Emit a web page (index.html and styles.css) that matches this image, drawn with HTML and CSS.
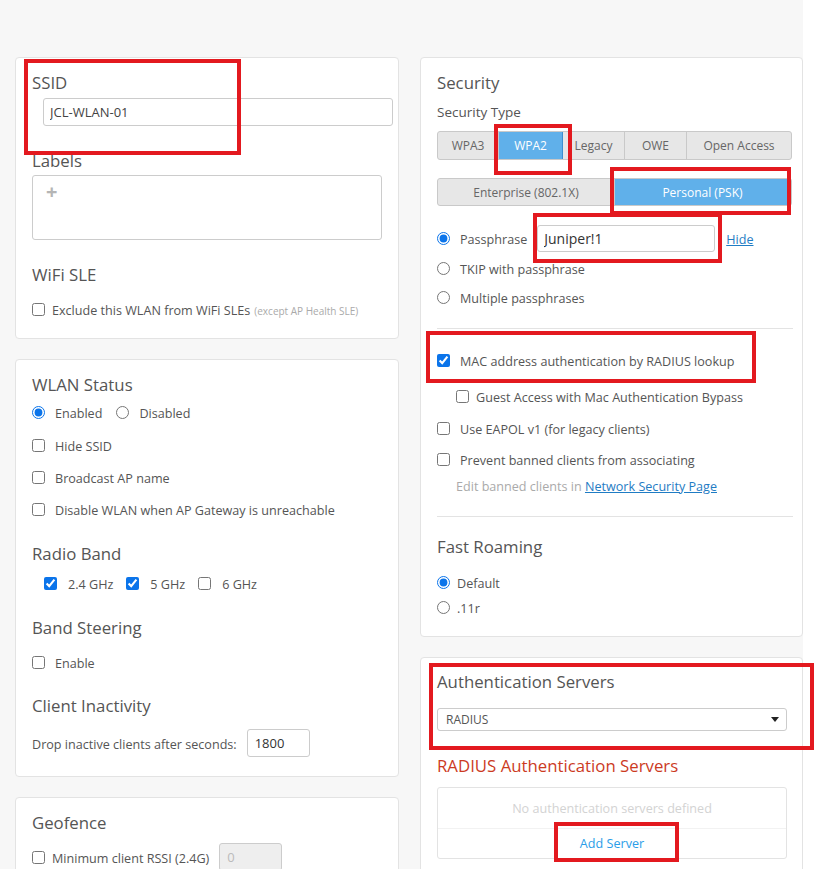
FILE: index.html
```html
<!DOCTYPE html>
<html lang="en">
<head>
<meta charset="utf-8">
<title>WLAN</title>
<link rel="stylesheet" href="styles.css">
</head>
<body>
<div class="page">
  <div class="col">
    <section class="card">
      <h2 class="h">SSID</h2>
      <input class="field ssid-input" type="text" value="JCL-WLAN-01">
      <h2 class="h labels-h">Labels</h2>
      <div class="labels-box"><span class="plus">+</span></div>
      <h2 class="h sle-h">WiFi SLE</h2>
      <label class="row sle-row"><input type="checkbox"><span>Exclude this WLAN from WiFi SLEs</span><span class="hint">(except AP Health SLE)</span></label>
    </section>

    <section class="card">
      <h2 class="h">WLAN Status</h2>
      <div class="row status-row">
        <label class="opt"><input type="radio" name="st" checked><span>Enabled</span></label>
        <label class="opt opt-2"><input type="radio" name="st"><span>Disabled</span></label>
      </div>
      <label class="row opt-row first"><input type="checkbox"><span>Hide SSID</span></label>
      <label class="row opt-row"><input type="checkbox"><span>Broadcast AP name</span></label>
      <label class="row opt-row"><input type="checkbox"><span>Disable WLAN when AP Gateway is unreachable</span></label>

      <h2 class="h sec-h">Radio Band</h2>
      <div class="row band-row">
        <label class="band"><input type="checkbox" checked><span>2.4 GHz</span></label>
        <label class="band"><input type="checkbox" checked><span>5 GHz</span></label>
        <label class="band"><input type="checkbox"><span>6 GHz</span></label>
      </div>

      <h2 class="h sec-h">Band Steering</h2>
      <label class="row opt-row steer"><input type="checkbox"><span>Enable</span></label>

      <h2 class="h sec-h ci-h">Client Inactivity</h2>
      <div class="row drop-row">
        <span>Drop inactive clients after seconds:</span>
        <input class="field num" type="text" value="1800">
      </div>
    </section>

    <section class="card geo">
      <h2 class="h">Geofence</h2>
      <div class="row geo-row">
        <label class="opt tight"><input type="checkbox"><span>Minimum client RSSI (2.4G)</span></label>
        <input class="field num disabled" type="text" value="0" disabled>
      </div>
    </section>
  </div>

  <div class="col">
    <section class="card rcard">
      <h2 class="h">Security</h2>
      <div class="subh">Security Type</div>
      <div class="seg seg1">
        <span class="s s-wpa3">WPA3</span>
        <span class="s s-wpa2 on">WPA2</span>
        <span class="s s-leg">Legacy</span>
        <span class="s s-owe">OWE</span>
        <span class="s s-open">Open Access</span>
      </div>
      <div class="seg seg2">
        <span class="s s-ent">Enterprise (802.1X)</span>
        <span class="s s-psk on">Personal (PSK)</span>
      </div>

      <div class="row pass-row">
        <label class="opt"><input type="radio" name="pp" checked><span>Passphrase</span></label>
        <input class="field pass" type="text" value="Juniper!1">
        <a class="link hide">Hide</a>
      </div>
      <label class="row opt-row tkip"><input type="radio" name="pp"><span>TKIP with passphrase</span></label>
      <label class="row opt-row multi"><input type="radio" name="pp"><span>Multiple passphrases</span></label>

      <div class="divider d1"></div>

      <label class="row opt-row mac"><input type="checkbox" checked><span>MAC address authentication by RADIUS lookup</span></label>
      <label class="row opt-row guest"><input type="checkbox"><span>Guest Access with Mac Authentication Bypass</span></label>
      <label class="row opt-row eapol"><input type="checkbox"><span>Use EAPOL v1 (for legacy clients)</span></label>
      <label class="row opt-row banned"><input type="checkbox"><span>Prevent banned clients from associating</span></label>
      <div class="row edit-row"><span class="muted">Edit banned clients in&nbsp;</span><a class="link">Network Security Page</a></div>

      <div class="divider d2"></div>

      <h2 class="h fr-h">Fast Roaming</h2>
      <label class="row opt-row fr1"><input type="radio" name="fr" checked><span>Default</span></label>
      <label class="row opt-row fr2"><input type="radio" name="fr"><span>.11r</span></label>
    </section>

    <section class="card rcard">
      <h2 class="h auth-h">Authentication Servers</h2>
      <div class="select"><span>RADIUS</span><span class="caret"></span></div>
      <h2 class="h radius-h">RADIUS Authentication Servers</h2>
      <div class="srv-box">
        <div class="srv-empty">No authentication servers defined</div>
        <div class="srv-add"><a class="add">Add Server</a></div>
      </div>
    </section>
  </div>

  <div class="mark m-ssid"></div>
  <div class="mark m-wpa2"></div>
  <div class="mark m-psk"></div>
  <div class="mark m-pass"></div>
  <div class="mark m-mac"></div>
  <div class="mark m-auth"></div>
  <div class="mark m-add"></div>
</div>
</body>
</html>
```

FILE: styles.css
```css
html, body {
  margin: 0;
  height: 869px;
  overflow: hidden;
  background: #fff;
}
body {
  font-family: "Open Sans", "Liberation Sans", sans-serif;
  font-size: 12.6px;
  color: #555;
}
.page {
  position: relative;
  box-sizing: border-box;
  width: 803px;
  height: 869px;
  padding: 57px 0 0 15px;
  background: #f7f7f7;
  display: grid;
  grid-template-columns: 384px 383px;
  column-gap: 21px;
  align-items: start;
}
.col {
  display: flex;
  flex-direction: column;
  gap: 20px;
}
.card {
  background: #fff;
  border: 1px solid #e3e3e3;
  border-radius: 4px;
  padding: 13px 16px 19px;
}
.rcard { padding-right: 10px; }
.h {
  margin: 0;
  font-size: 16.8px;
  line-height: 24px;
  font-weight: 400;
  color: #555;
}
.row {
  display: flex;
  align-items: center;
  height: 20px;
  line-height: 20px;
  white-space: nowrap;
}
.row > span, .opt > span, .band > span { padding-top: 3px; }
input[type=checkbox], input[type=radio] {
  width: 13px;
  height: 13px;
  margin: 0;
  flex: none;
  accent-color: #0b74ea;
}
.field {
  box-sizing: border-box;
  border: 1px solid #ccc;
  border-radius: 3px;
  font-family: "Open Sans", "Liberation Sans", sans-serif;
  font-size: 13px;
  color: #444;
  background: #fff;
  outline: none;
}

/* left card 1 */
.ssid-input {
  display: block;
  margin: 3px 0 0 11px;
  width: 350px;
  height: 28px;
  padding: 0 6px;
}
.labels-h { margin-top: 23px; }
.labels-box {
  margin-top: 2px;
  height: 65px;
  box-sizing: border-box;
  border: 1px solid #ccc;
  border-radius: 3px;
  padding: 4px 0 0 13px;
}
.plus {
  font-size: 20px;
  font-weight: 700;
  color: #b5b5b5;
  line-height: 24px;
}
.sle-h { margin-top: 23px; }
.sle-row { margin-top: 12px; gap: 7px; }
.hint {
  font-size: 10px;
  color: #aaa;
  margin-left: -3px;
}
.row > .hint { padding-top: 4px; }

/* left card 2 */
.status-row { margin-top: 5px; }
.opt { display: flex; align-items: center; gap: 10px; }
.opt-2 { margin-left: 14px; }
.opt-row { gap: 10px; }
.opt-row.first { margin-top: 13px; }
.opt-row { margin-top: 12px; }
.sec-h { margin-top: 23px; }
.band-row { margin-top: 7px; padding-left: 12px; gap: 13px; }
.band { display: flex; align-items: center; gap: 11px; }
.steer { margin-top: 12px; }
.ci-h { margin-top: 22px; }
.drop-row { margin-top: 11px; height: 28px; gap: 10px; }
.num {
  width: 63px;
  height: 28px;
  padding: 0 7px;
  color: #333;
}

/* left card 3 */
.geo { padding-top: 13px; }
.geo-row { margin-top: 8px; height: 28px; gap: 10px; }
.tight { gap: 7px; }
.disabled {
  background: #eee;
  color: #bbb;
}

/* right card 1 */
.subh {
  margin-top: 7px;
  font-size: 13.5px;
  line-height: 20px;
}
.seg {
  display: flex;
  width: 355px;
  box-sizing: border-box;
  border: 1px solid #c9c9c9;
  border-radius: 3px;
  overflow: hidden;
  background: #e7e7e7;
}
.seg1 { margin-top: 9px; height: 29px; }
.seg2 { margin-top: 18px; height: 28px; }
.s {
  display: flex;
  align-items: center;
  justify-content: center;
  font-size: 12px;
  color: #666;
  border-right: 1px solid #c9c9c9;
  box-sizing: border-box;
}
.s:last-child { border-right: none; }
.s.on {
  background: #60b0ea;
  color: #fff;
  border-right: 1px solid #3d8fcf;
}
.s-wpa3 { width: 61px; }
.s-wpa2 { width: 64px; }
.s-leg { width: 62px; }
.s-owe { width: 62px; }
.s-open { flex: 1; }
.s-ent { width: 177px; }
.s-psk { flex: 1; }
.pass-row { margin-top: 19px; height: 27px; }
.pass {
  margin-left: 10px;
  width: 178px;
  height: 27px;
  padding: 0 6px;
  font-size: 14px;
  color: #333;
}
.link {
  color: #1f7cc4;
  text-decoration: underline;
  cursor: pointer;
}
.row > .link { padding-top: 3px; }
.hide { margin-left: 11px; }
.tkip { margin-top: 6px; }
.multi { margin-top: 9px; }
.divider {
  width: 356px;
  height: 1px;
  background: #e3e3e3;
}
.d1 { margin-top: 21px; }
.mac { margin-top: 21px; }
.guest { margin-top: 16px; padding-left: 19px; gap: 7px; }
.eapol { margin-top: 12px; }
.banned { margin-top: 11px; }
.edit-row { margin-top: 6px; padding-left: 19px; }
.muted { color: #aaa; }
.d2 { margin-top: 21px; }
.fr-h { margin-top: 18px; }
.fr1 { margin-top: 13px; gap: 7px; }
.fr2 { margin-top: 5px; gap: 7px; }

/* right card 2 */
.auth-h { margin-top: -1px; }
.select {
  margin-top: 14px;
  width: 350px;
  height: 23px;
  box-sizing: border-box;
  border: 1px solid #ccc;
  border-radius: 3px;
  display: flex;
  align-items: center;
  justify-content: space-between;
  padding: 0 7px 0 8px;
  font-size: 12px;
  color: #555;
}
.caret {
  width: 0;
  height: 0;
  border-left: 4.5px solid transparent;
  border-right: 4.5px solid transparent;
  border-top: 5px solid #222;
}
.radius-h {
  margin-top: 23px;
  color: #cc3b1f;
}
.srv-box {
  margin-top: 9px;
  width: 350px;
  height: 72px;
  box-sizing: border-box;
  border: 1px solid #e3e3e3;
  border-radius: 3px;
  display: flex;
  flex-direction: column;
}
.srv-empty {
  height: 40px;
  display: flex;
  align-items: center;
  justify-content: center;
  color: #d3d3d3;
  border-bottom: 1px solid #f2f2f2;
}
.srv-add {
  flex: 1;
  display: flex;
  align-items: center;
  justify-content: center;
}
.add { color: #2a9de8; }

/* red annotation boxes */
.mark {
  position: absolute;
  box-sizing: border-box;
  border: 4px solid #e3191f;
  pointer-events: none;
}
.m-ssid { left: 24px; top: 59px; width: 217px; height: 96px; }
.m-wpa2 { left: 494px; top: 124px; width: 78px; height: 51px; }
.m-psk { left: 610px; top: 167px; width: 181px; height: 48px; }
.m-pass { left: 533px; top: 213px; width: 189px; height: 50px; }
.m-mac { left: 426px; top: 331px; width: 330px; height: 52px; }
.m-auth { left: 429px; top: 663px; width: 385px; height: 87px; }
.m-add { left: 554px; top: 822px; width: 125px; height: 40px; }
```
